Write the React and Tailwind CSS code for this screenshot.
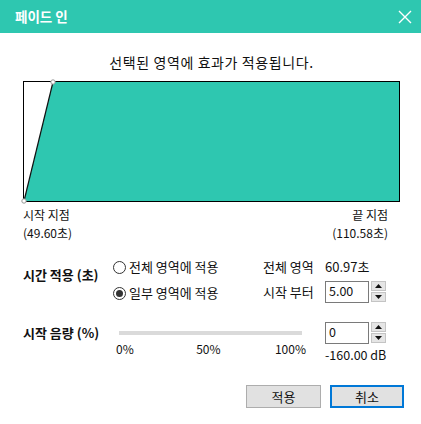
import React, { useState } from "react";

const TEAL = "#2ec7b0";

function Radio({ checked, label, onClick }) {
    return (
        <button type="button" onClick={onClick} className="flex items-center gap-[3px] h-[20px] text-[13px] text-[#111]">
            <span className="w-[13px] h-[13px] rounded-full border border-[#333] bg-white flex items-center justify-center">
                {checked && <span className="w-[7px] h-[7px] rounded-full bg-[#333]"></span>}
            </span>
            <span>{label}</span>
        </button>
    );
}

function Spinner() {
    return (
        <div className="flex flex-col gap-[1px] ml-[2px]">
            <div className="w-[15px] h-[10px] bg-[#e5e5e5] border border-[#c4c4c4] flex items-center justify-center">
                <svg width="7" height="4" viewBox="0 0 7 4"><path d="M0 4 L3.5 0 L7 4 Z" fill="#111" /></svg>
            </div>
            <div className="w-[15px] h-[10px] bg-[#e5e5e5] border border-[#c4c4c4] flex items-center justify-center">
                <svg width="7" height="4" viewBox="0 0 7 4"><path d="M0 0 L3.5 4 L7 0 Z" fill="#111" /></svg>
            </div>
        </div>
    );
}

function NumberBox({ value }) {
    return (
        <div className="flex items-start">
            <div className="w-[44px] h-[22px] border border-[#7a7a7a] bg-white px-[3px] text-[12.5px] leading-[17px] text-[#111]">
                {value}
            </div>
            <Spinner />
        </div>
    );
}

function FadeGraph() {
    // 375 x 119 inner drawing area
    return (
        <div className="mx-[23px] mt-[10px] w-[377px] h-[121px] border border-black bg-white">
            <svg width="375" height="119" viewBox="0 0 375 119" className="overflow-visible block">
                <polygon points="0,119 29,0 375,0 375,119" fill={TEAL} />
                <line x1="0" y1="119" x2="29" y2="0" stroke="#111" strokeWidth="1.2" />
                <circle cx="0" cy="119" r="2.2" fill="white" stroke="#999" strokeWidth="1" />
                <circle cx="29" cy="0" r="2.2" fill="white" stroke="#999" strokeWidth="1" />
            </svg>
        </div>
    );
}

export default function App() {
    const [mode, setMode] = useState("part");

    return (
        <div className="w-[421px] h-[424px] bg-white font-['Malgun_Gothic','Noto_Sans_CJK_KR','Noto_Sans',sans-serif] text-[#111] overflow-hidden">
            {/* title bar */}
            <div className="h-[33px] bg-[#2ec7b0] flex items-center justify-between pl-[15px] pr-[9px]">
                <span className="text-white font-bold text-[13.5px]">페이드 인</span>
                <svg width="14" height="14" viewBox="0 0 14 14">
                    <path d="M1 1 L13 13 M13 1 L1 13" stroke="white" strokeWidth="1.4" />
                </svg>
            </div>

            <p className="pt-[20px] text-center text-[14px] leading-[18px] tracking-[0.6px] pl-[2px]">선택된 영역에 효과가 적용됩니다.</p>

            <FadeGraph />

            <div className="flex justify-between pl-[23px] pr-[33px] mt-[4px] text-[12px] leading-[18px]">
                <div>
                    <div>시작 지점</div>
                    <div>(49.60초)</div>
                </div>
                <div className="text-right">
                    <div>끝 지점</div>
                    <div>(110.58초)</div>
                </div>
            </div>

            {/* time apply */}
            <div className="flex mt-[15px] pl-[23px]">
                <div className="w-[90px] pt-[9px] text-[13px] font-bold leading-[18px]">시간 적용 (초)</div>
                <div className="w-[150px] flex flex-col gap-[6px]">
                    <Radio checked={mode === "all"} label="전체 영역에 적용" onClick={() => setMode("all")} />
                    <Radio checked={mode === "part"} label="일부 영역에 적용" onClick={() => setMode("part")} />
                </div>
                <div className="flex flex-col gap-[4px] text-[13px]">
                    <div className="flex h-[20px] items-center">
                        <span className="w-[62px]">전체 영역</span>
                        <span>60.97초</span>
                    </div>
                    <div className="flex h-[22px] items-center">
                        <span className="w-[62px]">시작 부터</span>
                        <NumberBox value="5.00" />
                    </div>
                </div>
            </div>

            {/* start volume */}
            <div className="flex mt-[19px] pl-[23px]">
                <div className="w-[96px] h-[22px] flex items-center text-[13px] font-bold">시작 음량 (%)</div>
                <div className="w-[206px]">
                    <div className="h-[22px] flex items-center">
                        <div className="w-[183px] h-[4px] bg-[#dadada]"></div>
                    </div>
                    <div className="flex justify-between w-[190px] -ml-[3px] text-[12px] leading-[14px] mt-[-2px]">
                        <span>0%</span>
                        <span className="ml-[8px]">50%</span>
                        <span>100%</span>
                    </div>
                </div>
                <div>
                    <NumberBox value="0" />
                    <div className="text-[12.5px] leading-[16px] mt-[3px]">-160.00 dB</div>
                </div>
            </div>

            {/* buttons */}
            <div className="flex justify-end gap-[9px] pr-[17px] mt-[22px]">
                <button type="button" className="w-[75px] h-[23px] bg-[#e1e1e1] border border-[#adadad] text-[13px]">적용</button>
                <button type="button" className="w-[74px] h-[23px] bg-[#e1e1e1] border-2 border-[#0078d7] text-[13px]">취소</button>
            </div>
        </div>
    );
}
